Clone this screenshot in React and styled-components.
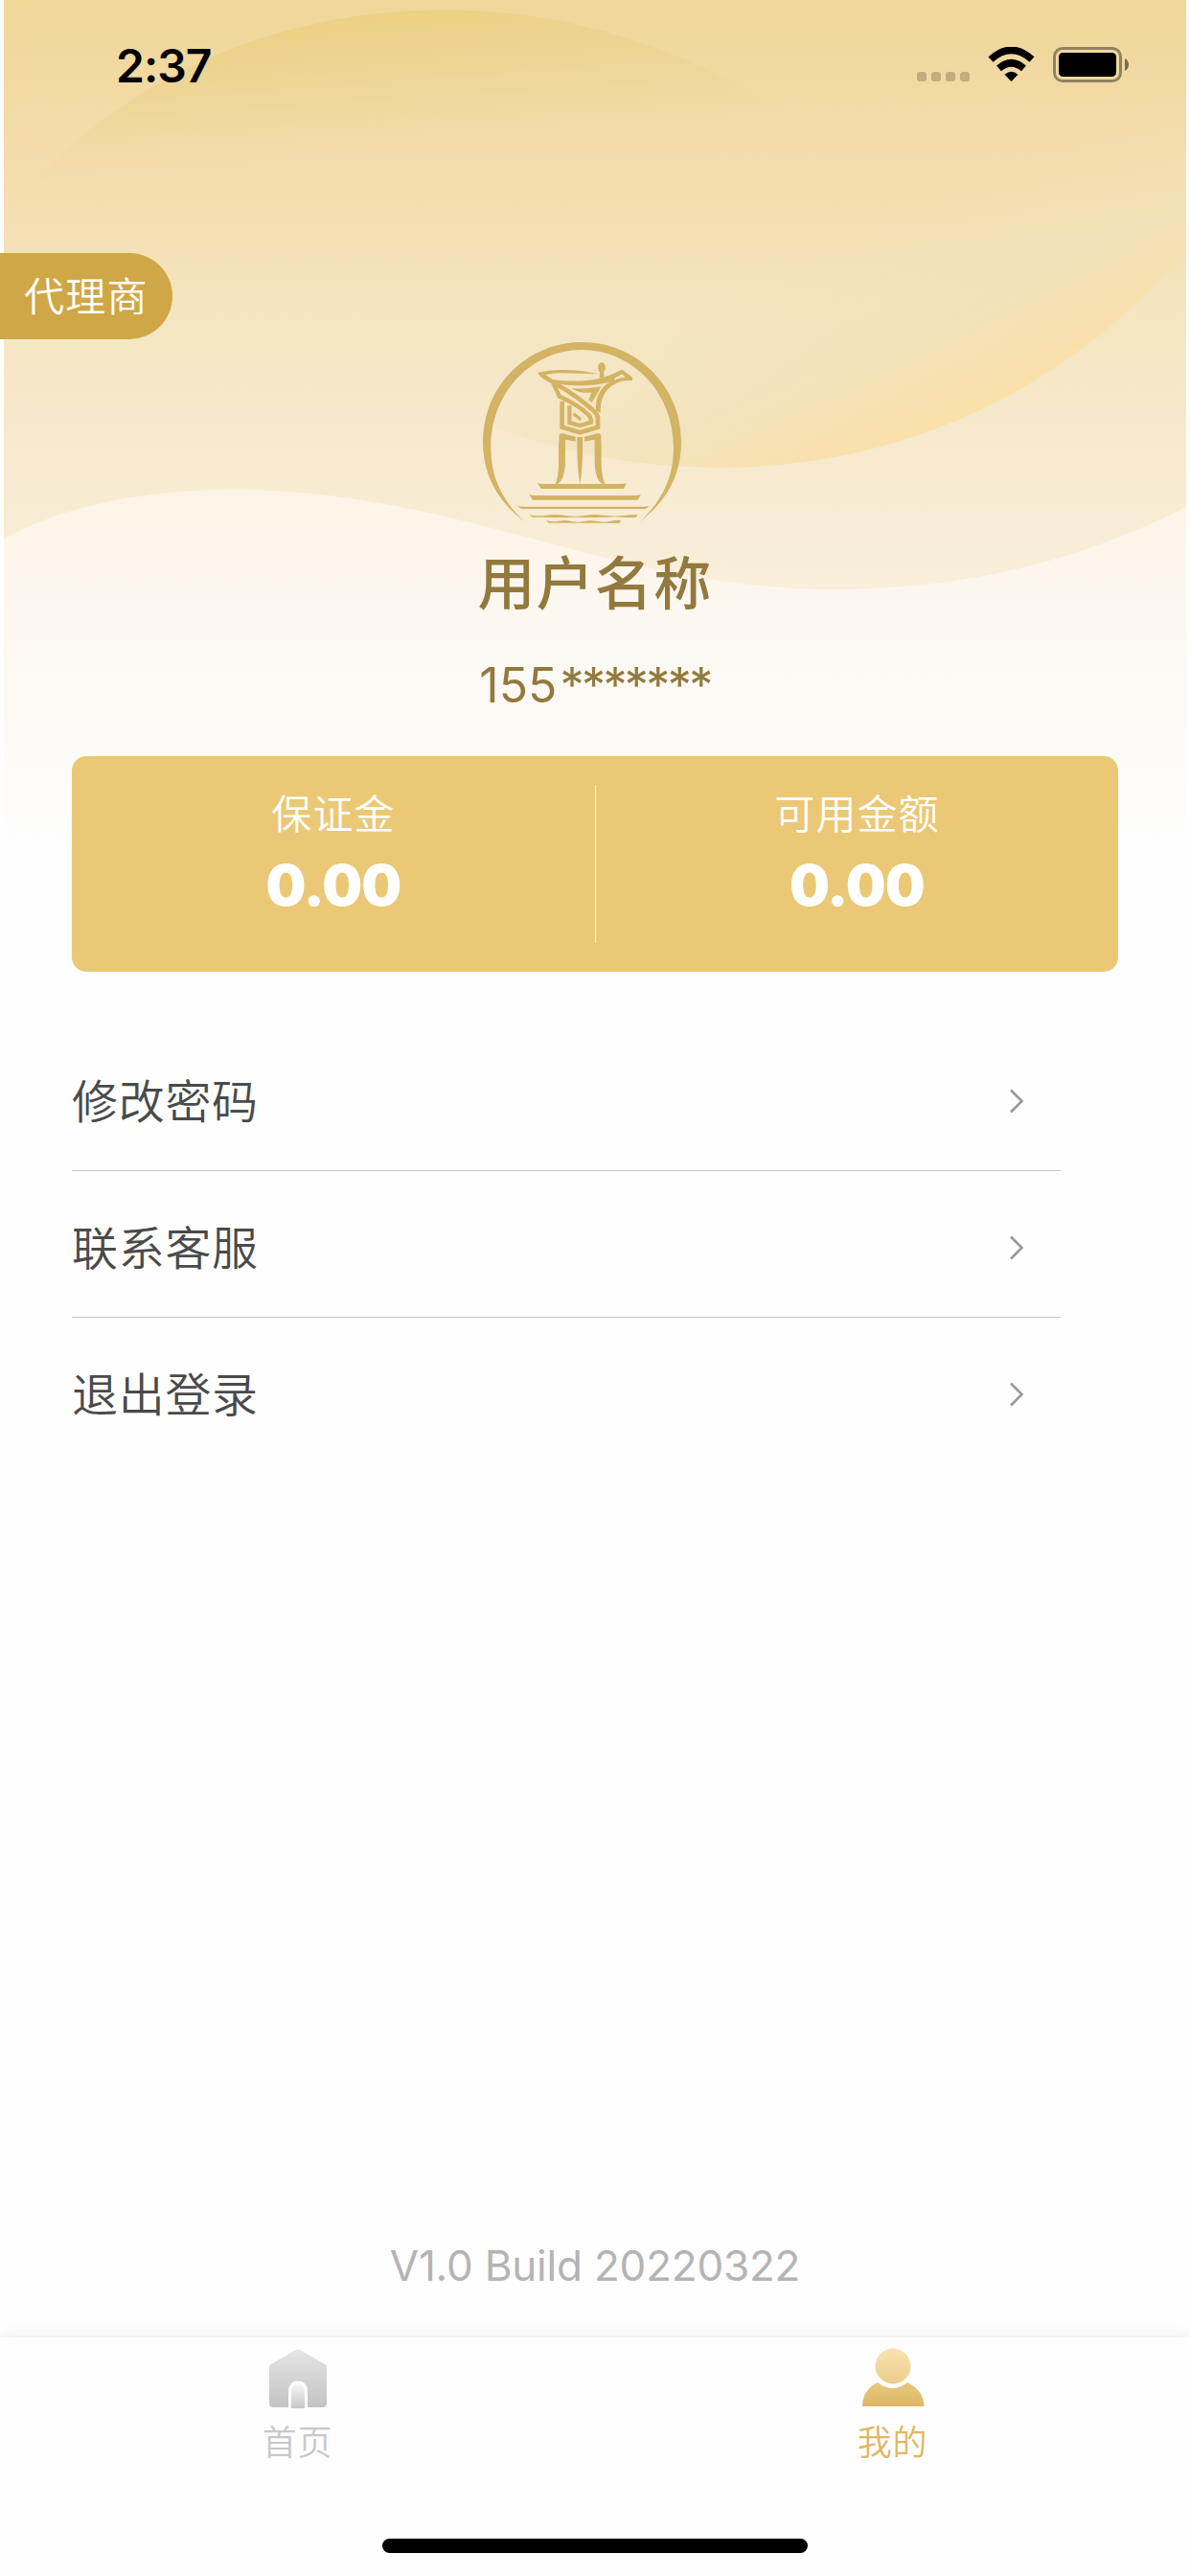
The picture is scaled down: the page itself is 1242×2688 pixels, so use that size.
import React from 'react'
import styled, { createGlobalStyle } from 'styled-components'

const GlobalStyle = createGlobalStyle`
  body {
    margin: 0;
    background: #fefefe;
    font-family: Inter, "Noto Sans CJK SC", sans-serif;
  }
`

const Page = styled.div`
  position: relative;
  width: 1242px;
  height: 2688px;
  overflow: hidden;
  display: flex;
  flex-direction: column;
`

const Backdrop = styled.svg`
  position: absolute;
  top: 0;
  left: 0;
  z-index: -1;
`

const StatusBar = styled.header`
  height: 132px;
  padding: 3px 63px 0 121px;
  box-sizing: border-box;
  display: flex;
  justify-content: space-between;
  align-items: center;
`

const Time = styled.span`
  font-size: 48px;
  line-height: 48px;
  font-weight: 600;
  letter-spacing: -1px;
  color: #000;
  padding-top: 2px;
`

const AgentTag = styled.div`
  width: 180px;
  height: 90px;
  margin-top: 132px;
  padding: 1px 0 0 25px;
  box-sizing: border-box;
  border-radius: 0 45px 45px 0;
  background: #cfa746;
  color: #fff;
  font-size: 42px;
  font-weight: 350;
  line-height: 90px;
  letter-spacing: 1.2px;
`

const Profile = styled.section`
  display: flex;
  flex-direction: column;
  align-items: center;
  height: 435px;
  color: #92793d;
`

const Logo = styled.svg`
  width: 234px;
  height: 195px;
  margin-top: 3px;
`

const UserName = styled.h1`
  margin: 13px 0 0;
  font-size: 60px;
  line-height: 88px;
  font-weight: 500;
  letter-spacing: 1.2px;
`

const Phone = styled.div`
  margin-top: 32px;
  font-size: 50px;
  line-height: 60px;
  font-weight: 400;
`

const Mask = styled.span`
  margin-left: 3px;
  letter-spacing: -2.6px;
`

const Balance = styled.section`
  margin: 0 75px;
  height: 225px;
  padding: 30px 0;
  box-sizing: border-box;
  border-radius: 15px;
  background: #eac876;
  display: grid;
  grid-template-columns: 1fr 1fr;
`

const BalanceItem = styled.div`
  display: flex;
  flex-direction: column;
  align-items: center;
  padding-top: 1px;
  color: #fff;

  & + & {
    border-left: 1px solid #fff;
  }
`

const BalanceLabel = styled.span`
  font-size: 42px;
  line-height: 60px;
  font-weight: 350;
  letter-spacing: 1.1px;
`

const BalanceValue = styled.strong`
  margin-top: 8px;
  font-size: 59px;
  line-height: 72px;
  font-weight: 900;
  letter-spacing: -0.8px;
`

const Menu = styled.nav`
  margin: 55px 135px 0 75px;
`

const MenuItem = styled.a`
  display: flex;
  justify-content: space-between;
  align-items: center;
  height: 153px;
  padding: 8px 38px 0 0;
  box-sizing: border-box;
  border-bottom: 1px solid ${props => props.$last ? 'transparent' : '#c8c8c8'};
  color: #4a4a4a;
`

const MenuLabel = styled.span`
  padding-top: 1px;
  font-size: 48px;
  line-height: 70px;
  font-weight: 350;
  letter-spacing: 0.7px;
`

const Version = styled.div`
  margin-top: auto;
  height: 105px;
  text-align: center;
  font-size: 44px;
  line-height: 60px;
  letter-spacing: -0.2px;
  color: #b4b4b4;
`

const TabBar = styled.footer`
  height: 249px;
  flex-shrink: 0;
  background: #fefefe;
  box-shadow: 0 -2px 14px rgba(0, 0, 0, 0.07);
  display: grid;
  grid-template-columns: 1fr 1fr;
  grid-template-rows: 210px 15px;
`

const Tab = styled.a`
  display: flex;
  flex-direction: column;
  align-items: center;
  padding-top: 10px;
  color: ${props => props.$active ? '#dfb764' : '#c8c8c8'};
  font-size: 36px;
  line-height: 50px;
  font-weight: 350;
  letter-spacing: 0.8px;

  svg {
    margin-bottom: 11px;
  }
`

const HomeIndicator = styled.div`
  grid-column: 1 / 3;
  justify-self: center;
  width: 444px;
  height: 15px;
  border-radius: 8px;
  background: #000;
`

const Waves = () => (
  <Backdrop width="1242" height="900" viewBox="0 0 1242 900">
    <defs>
      <linearGradient id="sky" x1="0" y1="0" x2="0" y2="1">
        <stop offset="0" stopColor="#f0d699" />
        <stop offset="0.25" stopColor="#f4dfb2" />
        <stop offset="0.4" stopColor="#f5e6c4" />
        <stop offset="0.7" stopColor="#f9efdc" />
        <stop offset="1" stopColor="#fefefe" />
      </linearGradient>
      <linearGradient id="foam" gradientUnits="userSpaceOnUse" x1="0" y1="510" x2="0" y2="890">
        <stop offset="0" stopColor="#fcf4e6" />
        <stop offset="0.35" stopColor="#fcf7f0" />
        <stop offset="1" stopColor="#fefefe" />
      </linearGradient>
      <linearGradient id="hill" gradientUnits="userSpaceOnUse" x1="440" y1="10" x2="454" y2="158">
        <stop offset="0" stopColor="#ecd084" />
        <stop offset="1" stopColor="#ecd59a" stopOpacity="0" />
      </linearGradient>
      <linearGradient id="bowl" gradientUnits="userSpaceOnUse" x1="920" y1="475" x2="832" y2="272">
        <stop offset="0" stopColor="#fbe0a8" />
        <stop offset="0.5" stopColor="#f2e1b8" stopOpacity="0.7" />
        <stop offset="1" stopColor="#f2e1b8" stopOpacity="0" />
      </linearGradient>
    </defs>
    <rect x="4" width="1234" height="900" fill="url(#sky)" />
    <path d="M30 192C150 70 300 10.500 463 10.500C620 10.500 740 65 850 135L850 220H30Z" fill="url(#hill)" />
    <path d="M507 443C580 470 660 488 752 488C950 488 1120 400 1238 262V100L507 300Z" fill="url(#bowl)" />
    <path d="M4 562C70 526 155 511 242 511C480 511 640 615 871 615C1010 615 1130 584 1238 529V900H4Z" fill="url(#foam)" />
  </Backdrop>
)

const StatusIcons = () => (
  <svg width="222" height="37" viewBox="957 49 222 37">
    <g fill="#000" fillOpacity="0.2">
      <rect x="957" y="75" width="10" height="10" rx="3" />
      <rect x="972" y="75" width="10" height="10" rx="3" />
      <rect x="987" y="75" width="10" height="10" rx="3" />
      <rect x="1002" y="75" width="10" height="10" rx="3" />
    </g>
    <path d="M1055.5 85L1048.500 77.800Q1055.500 71.600 1062.500 77.800Z" />
    <g fill="none" stroke="#000">
      <path d="M1042.500 71.300Q1055.500 60.200 1068.500 71.300" strokeWidth="7.500" />
      <path d="M1034 62Q1055.500 42.800 1077 62" strokeWidth="7.500" />
    </g>
    <rect x="1100.500" y="50.500" width="69" height="34" rx="8.500" fill="none" stroke="#000" strokeOpacity="0.4" strokeWidth="3" />
    <rect x="1105" y="55" width="60" height="25" rx="4.500" />
    <path d="M1174 61Q1178 63.500 1178 67.500T1174 74Z" fillOpacity="0.5" />
  </svg>
)

// bronze wine vessel standing on a stepped base, drawn at 3x
const Emblem = () => (
  <Logo viewBox="72 51 702 585" fill="#d3b364">
    <path d="M203 614C120 550 72 470 72 362C72 190 210 51 382 51S693 190 693 362C693 470 645 550 563 614C630 550 669 480 669 380C669 210 540 75 382 75S97 210 97 380C97 480 136 550 203 614Z" />
    <path fillRule="evenodd" d="M243 147C290 134 370 135 434 151C370 151 310 143 268 153L290 168C360 178 430 172 472 153L508 137L540 161V171L512 172C465 184 440 214 440 273L426 263C424 220 442 190 470 176C420 188 360 190 314 182L290 182C264 170 252 160 243 147ZM484 164L508 151L518 161C504 162 494 165 484 170Z" />
    <path d="M437 164L438 145C428 132 432 117 444 114C456 117 460 132 450 145L451 162Z" />
    <path d="M350 194C380 200 410 195 442 190C434 208 424 222 413 240L403 231L412 209C390 211 366 208 350 194Z" />
    <g fill="none" stroke="#d3b364">
      <path d="M320 236V317L376 334L432 317V288Q430 276 418 265C385 236 350 210 302 183" strokeWidth="14" />
      <path d="M292 180L312 221C350 238 380 256 402 278Q411 286 411 302L376 312L343 303V250" strokeWidth="13" />
      <path d="M356 275L379 294" strokeWidth="10" />
    </g>
    <path d="M311 342Q314 336 322 337L362 347V362L330 356V420C330 460 322 485 304 496H298C312 470 309 420 309 380Z" />
    <path d="M442 342Q439 336 431 337L390 347V362L422 356V420C422 460 430 485 448 496H455C441 470 443 420 443 380Z" />
    <path d="M367 348H384C385 400 384 450 376 497C368 450 366 400 367 348Z" />
    <path d="M243 491Q250 495 262 495H505Q514 495 522 491L513 510H254Z" />
    <path d="M216 528Q222 531 234 531H550Q560 531 567 528L556 545H228Z" />
    <path d="M180 564Q188 566 200 566H575Q586 566 594 564L582 573H192Z" />
    <path d="M217 591Q240 597 270 593T330 594T390 594T450 593T510 594T557 591L552 599Q530 601 510 599T450 599T390 600T330 600T270 599H226Z" />
    <path d="M270 609Q290 615 310 611T350 612T390 612T430 612T470 612T504 609L500 617Q480 619 460 617H278Z" />
  </Logo>
)

const Chevron = () => (
  <svg width="16" height="26" viewBox="0 0 16 26" fill="none" stroke="#999" strokeWidth="2.6">
    <path d="M2 1.500L13.500 13L2 24.500" />
  </svg>
)

const HomeIcon = () => (
  <svg width="62" height="64" viewBox="0 0 62 64">
    <defs>
      <linearGradient id="house" x1="0" y1="0" x2="0" y2="1">
        <stop offset="0" stopColor="#e4e4e4" />
        <stop offset="1" stopColor="#c4c4c4" />
      </linearGradient>
      <linearGradient id="door" x1="0" y1="0" x2="0" y2="1">
        <stop offset="0" stopColor="#fafafa" />
        <stop offset="1" stopColor="#c4c4c4" />
      </linearGradient>
    </defs>
    <path d="M29 3Q31 2 33 3L59 18Q61 19 61 21V59Q61 63 57 63H5Q1 63 1 59V21Q1 19 3 18Z" fill="url(#house)" />
    <path d="M22.500 65V48Q22.500 37 31 37T39.500 48V65" fill="url(#door)" stroke="#fff" strokeWidth="3" />
  </svg>
)

const UserIcon = () => (
  <svg width="66" height="64" viewBox="0 0 66 64">
    <defs>
      <linearGradient id="head" x1="0" y1="0" x2="0" y2="1">
        <stop offset="0" stopColor="#f9e3b2" />
        <stop offset="1" stopColor="#ebcd8a" />
      </linearGradient>
      <linearGradient id="body" x1="0" y1="0" x2="0" y2="1">
        <stop offset="0" stopColor="#e7c980" />
        <stop offset="1" stopColor="#ddb765" />
      </linearGradient>
    </defs>
    <circle cx="33" cy="20" r="18.500" fill="url(#head)" />
    <path d="M17 37Q33 49 48 37Q65 45 65.500 62H1Q1 45 17 37Z" fill="url(#body)" />
  </svg>
)

const balances = [
  { label: '保证金', value: '0.00' },
  { label: '可用金额', value: '0.00' },
]

const menu = ['修改密码', '联系客服', '退出登录']

const App = () => {
  return (
    <Page>
      <GlobalStyle />
      <Waves />
      <StatusBar>
        <Time>2:37</Time>
        <StatusIcons />
      </StatusBar>
      <AgentTag>代理商</AgentTag>
      <Profile>
        <Emblem />
        <UserName>用户名称</UserName>
        <Phone>155<Mask>*******</Mask></Phone>
      </Profile>
      <Balance>
        {balances.map(item => (
          <BalanceItem key={item.label}>
            <BalanceLabel>{item.label}</BalanceLabel>
            <BalanceValue>{item.value}</BalanceValue>
          </BalanceItem>
        ))}
      </Balance>
      <Menu>
        {menu.map((label, i) => (
          <MenuItem key={label} $last={i === menu.length - 1}>
            <MenuLabel>{label}</MenuLabel>
            <Chevron />
          </MenuItem>
        ))}
      </Menu>
      <Version>V1.0 Build 20220322</Version>
      <TabBar>
        <Tab>
          <HomeIcon />
          首页
        </Tab>
        <Tab $active>
          <UserIcon />
          我的
        </Tab>
        <HomeIndicator />
      </TabBar>
    </Page>
  )
}

export default App
